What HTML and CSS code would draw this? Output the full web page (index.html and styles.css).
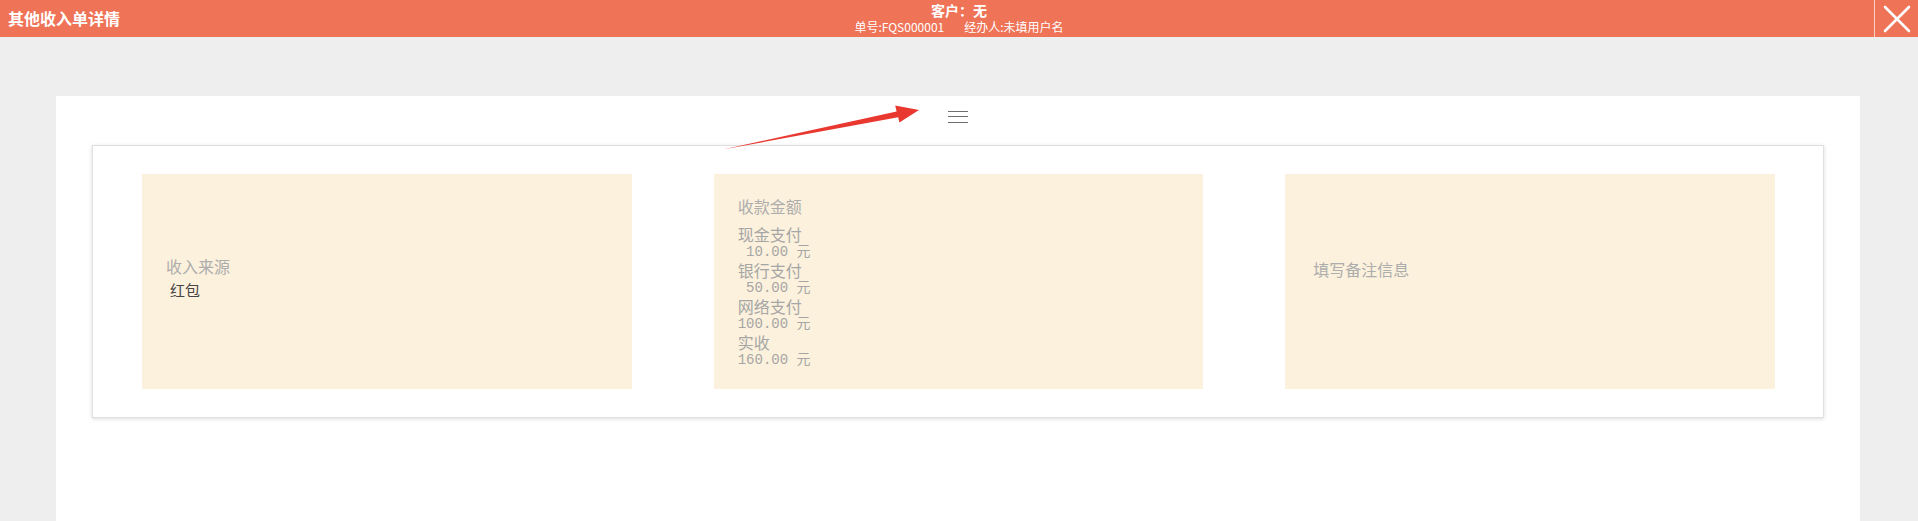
FILE: index.html
```html
<!DOCTYPE html>
<html lang="zh-CN">
<head>
<meta charset="utf-8">
<title>其他收入单详情</title>
<link rel="stylesheet" href="styles.css">
</head>
<body>
<header class="topbar">
  <div class="title">其他收入单详情</div>
  <div class="center">
    <div class="customer">客户：无</div>
    <div class="meta"><span>单号:FQS000001</span><span>经办人:未填用户名</span></div>
  </div>
  <div class="actions">
    <button class="close" aria-label="关闭">
      <svg width="28" height="28" viewBox="0 0 28 28"><path d="M2 2 L26 26 M26 2 L2 26" stroke="#fff" stroke-width="2.6" stroke-linecap="round" fill="none"/></svg>
    </button>
  </div>
</header>

<main class="panel">
  <div class="menu">
    <svg width="20" height="12" viewBox="0 0 20 12"><path d="M0 0.5 H20 M0 5.5 H20 M0 11.5 H20" stroke="#6e6e6e" stroke-width="1" fill="none"/></svg>
  </div>
  <section class="card">
    <div class="box box-source">
      <div class="label">收入来源</div>
      <div class="value">红包</div>
    </div>
    <div class="box box-amount">
      <div class="label label-gap">收款金额</div>
      <div class="line">现金支付</div>
      <div class="line num"> 10.00 元</div>
      <div class="line">银行支付</div>
      <div class="line num"> 50.00 元</div>
      <div class="line">网络支付</div>
      <div class="line num">100.00 元</div>
      <div class="line">实收</div>
      <div class="line num">160.00 元</div>
    </div>
    <div class="box box-note">
      <div class="label note">填写备注信息</div>
    </div>
  </section>
</main>

<svg class="annotation" width="1918" height="521" viewBox="0 0 1918 521">
  <polygon points="723,149.5 896.6,111.6 895.2,105.6 919,110 899.4,122.6 898.2,117.2" fill="#e8382f"/>
</svg>
</body>
</html>
```

FILE: styles.css
```css
html, body {
  margin: 0;
  padding: 0;
}
body {
  background: #eeeeee;
  font-family: "Noto Sans CJK SC", "Noto Sans", sans-serif;
  height: 100vh;
  overflow: hidden;
  position: relative;
}
.topbar {
  height: 37px;
  background: #ef7357;
  color: #fff;
  display: grid;
  grid-template-columns: 1fr auto 1fr;
}
.title {
  font-size: 16px;
  font-weight: bold;
  line-height: 36px;
  padding-left: 8px;
}
.center {
  text-align: center;
  padding-top: 1px;
}
.customer {
  font-size: 14px;
  font-weight: bold;
  line-height: 18px;
}
.meta {
  font-size: 12px;
  line-height: 16px;
  display: flex;
  justify-content: center;
  gap: 20px;
}
.actions {
  display: flex;
  justify-content: flex-end;
}
.close {
  width: 44px;
  height: 38px;
  border: 0;
  border-left: 1px solid rgba(255, 255, 255, 0.65);
  background: transparent;
  padding: 0;
  display: flex;
  align-items: center;
  justify-content: center;
}
.panel {
  margin: 59px 58px 0 56px;
  background: #fff;
  height: calc(100vh - 96px);
  padding: 0 36px;
  box-sizing: border-box;
}
.menu {
  height: 49px;
  box-sizing: border-box;
  padding-top: 15px;
  display: flex;
  justify-content: center;
}
.card {
  border: 1px solid #e0e0e0;
  box-shadow: 0 1px 4px rgba(0, 0, 0, 0.14);
  padding: 28px 48px 28px 49px;
  display: flex;
  gap: 82px;
}
.box {
  flex: 1 1 0;
  min-width: 0;
  height: 215px;
  background: #fcf1dc;
  box-sizing: border-box;
  padding: 0 24px;
  display: flex;
  flex-direction: column;
  justify-content: center;
  color: #a8a8a8;
  font-size: 16px;
}
.label {
  line-height: 20px;
  color: #adadad;
}
.value {
  margin-top: 4px;
  padding-left: 4px;
  font-size: 15px;
  line-height: 20px;
  color: #444;
}
.box-source {
  padding-bottom: 8px;
}
.label-gap {
  margin-bottom: 9px;
}
.line {
  height: 18px;
  line-height: 18px;
  color: #a6a6a6;
  white-space: pre;
}
.num {
  font-family: "Liberation Mono", "Noto Sans CJK SC", monospace;
  font-size: 14px;
}
.box-amount {
  padding-top: 1px;
}
.box-note {
  justify-content: flex-start;
  padding-top: 85px;
}
.note {
  padding-left: 4px;
}
.annotation {
  position: absolute;
  left: 0;
  top: 0;
  pointer-events: none;
}
```
